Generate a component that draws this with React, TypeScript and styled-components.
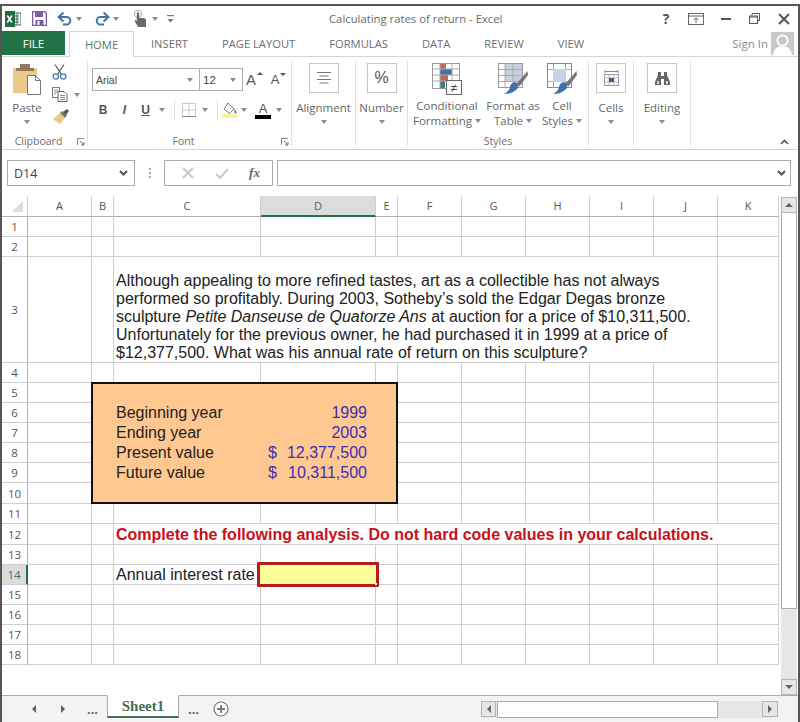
import React from "react";
import styled, { createGlobalStyle } from "styled-components";

const uiFont = `"Open Sans", "Noto Sans", sans-serif`;
const cellFont = `"Liberation Sans", Arial, sans-serif`;
const green = "#217346";
const gridLine = "#cfcfcf";

const GlobalStyle = createGlobalStyle`
  html, body {
    margin: 0;
    padding: 0;
    background: #fff;
  }
  * {
    box-sizing: border-box;
  }
`;

const Page = styled.div`
  width: 800px;
  height: 722px;
  padding-top: 4px;
  background: #fff;
  overflow: hidden;
`;

const Frame = styled.div`
  height: 718px;
  display: flex;
  flex-direction: column;
  position: relative;
  border: 2px solid #555;
  border-bottom: none;
  font-family: ${uiFont};
  color: #666;
`;

/* title bar */
const TitleBar = styled.div`
  height: 25px;
  flex: none;
  display: flex;
  align-items: center;
`;

const Qat = styled.div`
  width: 327px;
  display: flex;
  align-items: center;
`;

const QatSlot = styled.div<{ $w: number; $ml?: number }>`
  width: ${(p) => p.$w}px;
  margin-left: ${(p) => p.$ml ?? 0}px;
  display: flex;
  justify-content: center;
  align-items: center;
`;

const Caret = styled.span`
  display: inline-block;
  width: 0;
  height: 0;
  border-left: 3.5px solid transparent;
  border-right: 3.5px solid transparent;
  border-top: 4px solid #8a8a8a;
`;

const Title = styled.div`
  font-size: 11.3px;
  color: #6a6a6a;
  white-space: nowrap;
`;

const WindowButtons = styled.div`
  margin-left: auto;
  display: flex;
  align-items: center;
`;

const WindowButton = styled.div<{ $w: number }>`
  width: ${(p) => p.$w}px;
  display: flex;
  justify-content: center;
  align-items: center;
  font-weight: 700;
  font-size: 14px;
  color: #555;
`;

/* tabs */
const TabRow = styled.div`
  height: 26px;
  flex: none;
  display: flex;
  align-items: stretch;
  padding-bottom: 1px;
  border-bottom: 1px solid #d4d4d4;
`;

const FileTab = styled.div`
  width: 63px;
  background: ${green};
  color: #fff;
  font-size: 11.5px;
  display: flex;
  align-items: center;
  justify-content: center;
`;

const Tab = styled.div`
  padding: 0 17px;
  display: flex;
  align-items: center;
  font-size: 11.2px;
  white-space: nowrap;
  color: #6e6e6e;
`;

const ActiveTab = styled.div`
  width: 65px;
  margin: 0 0 -2px 4px;
  display: flex;
  align-items: center;
  justify-content: center;
  font-size: 11.2px;
  color: #4f7d66;
  background: #fff;
  border: 1px solid #d4d4d4;
  border-bottom: none;
`;

const SignIn = styled.div`
  margin-left: auto;
  margin-right: 4px;
  display: flex;
  align-items: center;
  gap: 3px;
  font-size: 11.5px;
  color: #8a8a8a;
`;

/* ribbon */
const Ribbon = styled.div`
  height: 93px;
  flex: none;
  display: flex;
  padding-top: 4px;
  position: relative;
  border-bottom: 1px solid #d4d4d4;
`;

const Group = styled.div<{ $w: number }>`
  width: ${(p) => p.$w}px;
  height: 85px;
  border-right: 1px solid #e2e2e2;
  display: flex;
  flex-direction: column;
  position: relative;
`;

const GroupBody = styled.div`
  height: 72px;
  flex: none;
  display: flex;
`;

const GroupLabel = styled.div<{ $pr?: number }>`
  font-size: 10.5px;
  line-height: 14px;
  height: 14px;
  margin-top: 1px;
  padding-right: ${(p) => p.$pr ?? 0}px;
  text-align: center;
  color: #6e6e6e;
`;

const Launcher = styled.svg`
  position: absolute;
  right: 2px;
  bottom: 0;
  width: 8px;
  height: 8px;
`;

const PasteColumn = styled.div`
  width: 50px;
  display: flex;
  flex-direction: column;
  align-items: center;
  padding-top: 3px;
`;

const PasteLabel = styled.div`
  margin-top: 5px;
  font-size: 11.5px;
  line-height: 15px;
`;

const SmallColumn = styled.div`
  display: flex;
  flex-direction: column;
  padding-top: 3px;
  gap: 7px;
`;

const SmallTool = styled.div`
  display: flex;
  align-items: center;
  gap: 6px;
`;

const LabelText = styled.div`
  font-size: 11.5px;
  line-height: 15px;
  color: #666;
  text-align: center;
  white-space: nowrap;
`;

const FontColumn = styled.div`
  display: flex;
  flex-direction: column;
  padding: 7px 0 0 4px;
`;

const ComboRow = styled.div`
  display: flex;
  align-items: center;
  height: 23px;
`;

const Combo = styled.div<{ $w: number }>`
  width: ${(p) => p.$w}px;
  height: 23px;
  border: 1px solid #ababab;
  margin-right: -1px;
  padding: 0 6px 0 3px;
  display: flex;
  align-items: center;
  justify-content: space-between;
  font-family: ${cellFont};
  font-size: 10.5px;
  color: #444;
`;

const SizeValue = styled.span`
  font-size: 11.5px;
`;

const GrowFont = styled.div<{ $size: number }>`
  width: 23px;
  margin-left: 1px;
  display: flex;
  justify-content: center;
  align-items: flex-start;
  font-family: ${cellFont};
  font-size: ${(p) => p.$size}px;
  color: #555;
  gap: 1px;
`;

const TinyArrow = styled.span<{ $down?: boolean }>`
  width: 0;
  height: 0;
  margin-top: 1px;
  border-left: 3px solid transparent;
  border-right: 3px solid transparent;
  ${(p) =>
    p.$down ? "border-top: 3px solid #555;" : "border-bottom: 3px solid #555;"}
`;

const ToolRow = styled.div`
  display: flex;
  align-items: center;
  height: 22px;
  margin-top: 8px;
`;

const FontTool = styled.div<{ $w: number; $ml?: number }>`
  width: ${(p) => p.$w}px;
  margin-left: ${(p) => p.$ml ?? 0}px;
  display: flex;
  justify-content: center;
  align-items: center;
`;

const StyleLetter = styled.span<{ $italic?: boolean; $underline?: boolean }>`
  font-family: ${cellFont};
  font-size: 12px;
  font-weight: 700;
  color: #555;
  font-style: ${(p) => (p.$italic ? "italic" : "normal")};
  text-decoration: ${(p) => (p.$underline ? "underline" : "none")};
`;

const ToolCaret = styled.div`
  width: 12px;
  display: flex;
  justify-content: center;
`;

const ToolSeparator = styled.div`
  width: 1px;
  height: 20px;
  margin: 0 4px 0 6px;
  background: #e2e2e2;
`;

const ColorA = styled.div`
  display: flex;
  flex-direction: column;
  align-items: center;
  font-family: ${cellFont};
  font-size: 13px;
  line-height: 13px;
  color: #555;

  &::after {
    content: "";
    width: 16px;
    height: 4px;
    background: #000;
  }
`;

const BoxedColumn = styled.div`
  flex: 1;
  display: flex;
  flex-direction: column;
  align-items: center;
  padding-top: 2px;
`;

const BigBox = styled.div`
  width: 30px;
  height: 30px;
  border: 1px solid #c6c6c6;
  display: flex;
  align-items: center;
  justify-content: center;
  margin-bottom: 7px;
  font-family: ${cellFont};
  font-size: 16px;
  color: #555;
`;

const CaretLine = styled.div`
  height: 14px;
  display: flex;
  align-items: center;
`;

const StyleColumn = styled.div<{ $w: number }>`
  width: ${(p) => p.$w}px;
  display: flex;
  flex-direction: column;
  align-items: center;
  padding-top: 2px;
`;

const StyleIcon = styled.div`
  height: 33px;
  margin-bottom: 2px;
`;

const InlineCaret = styled(Caret)`
  margin-left: 3px;
  vertical-align: 2px;
`;

const Collapse = styled.svg`
  position: absolute;
  right: 9px;
  bottom: 4px;
`;

/* formula bar */
const FormulaBar = styled.div`
  height: 46px;
  flex: none;
  display: flex;
  align-items: flex-start;
  padding: 10px 7px 0 5px;
`;

const NameBox = styled.div`
  width: 128px;
  height: 26px;
  border: 1px solid #ababab;
  display: flex;
  align-items: center;
  justify-content: space-between;
  padding: 0 6px;
  font-size: 12.5px;
  color: #444;
`;

const Grip = styled.div`
  width: 29px;
  height: 26px;
  display: flex;
  flex-direction: column;
  align-items: center;
  justify-content: center;
  gap: 2px;

  span {
    width: 2px;
    height: 2px;
    background: #aaa;
  }
`;

const FxBox = styled.div`
  width: 109px;
  height: 26px;
  margin-right: 4px;
  border: 1px solid #ababab;
  display: flex;
  align-items: center;
  justify-content: space-around;
  padding: 0 2px 0 6px;
`;

const FxLabel = styled.span`
  font-family: "Liberation Serif", serif;
  font-style: italic;
  font-weight: 700;
  font-size: 13px;
  color: #666;
`;

const FormulaInput = styled.div`
  flex: 1;
  height: 26px;
  border: 1px solid #ababab;
  display: flex;
  align-items: center;
  justify-content: flex-end;
  padding-right: 4px;
`;

/* sheet */
const SheetArea = styled.div`
  flex: 1;
  min-height: 0;
  display: flex;
`;

const Sheet = styled.div`
  width: 777px;
  position: relative;
`;

const Row = styled.div<{ $h: number }>`
  display: grid;
  grid-template-columns: 26px 64px 22px 147px 115px 22px 64px 64px 64px 64px 64px 61px;
  height: ${(p) => p.$h}px;
`;

const ColumnHead = styled.div<{ $active?: boolean }>`
  display: flex;
  align-items: center;
  justify-content: center;
  font-size: 11px;
  padding-bottom: 1px;
  color: ${(p) => (p.$active ? "#3f6f57" : "#555")};
  background: ${(p) => (p.$active ? "#dcdcdc" : "#fff")};
  border-right: 1px solid ${gridLine};
  border-bottom: ${(p) => (p.$active ? `2px solid ${green}` : "1px solid #b0b0b0")};
`;

const Corner = styled.div`
  position: relative;
  border-right: 1px solid ${gridLine};
  border-bottom: 1px solid #b0b0b0;

  &::after {
    content: "";
    position: absolute;
    right: 4px;
    bottom: 4px;
    border-left: 11px solid transparent;
    border-bottom: 11px solid #dcdcdc;
  }
`;

const RowHead = styled.div<{ $active?: boolean }>`
  display: flex;
  align-items: center;
  justify-content: center;
  font-size: 11.5px;
  color: ${(p) => (p.$active ? "#3f6f57" : "#555")};
  background: ${(p) => (p.$active ? "#dcdcdc" : "#fff")};
  border-right: ${(p) => (p.$active ? `2px solid ${green}` : "1px solid #b0b0b0")};
  border-bottom: 1px solid ${gridLine};
`;

const Cell = styled.div<{ $span?: number }>`
  grid-column: span ${(p) => p.$span ?? 1};
  border-right: 1px solid ${gridLine};
  border-bottom: 1px solid ${gridLine};
  padding-left: 2px;
  position: relative;
  display: flex;
  font-family: ${cellFont};
  font-size: 16px;
  line-height: 18px;
  color: #222;
  white-space: nowrap;
`;

const Paragraph = styled.div`
  align-self: flex-end;
`;

const Analysis = styled.div`
  align-self: center;
  padding-top: 1px;
  font-weight: 700;
  color: #c8101a;
`;

const RateLabel = styled.div`
  align-self: center;
`;

const SelectedCell = styled.div`
  position: absolute;
  left: -4px;
  top: -3px;
  width: 122px;
  height: 25px;
  z-index: 2;
  background: #ffff99;
  border: 3px solid #b51c1c;
  border-radius: 1px;

  &::after {
    content: "";
    position: absolute;
    right: -1px;
    bottom: -1px;
    width: 2px;
    height: 2px;
    background: #fff;
  }
`;

const InputsBox = styled.div`
  position: absolute;
  left: 89px;
  top: 186px;
  width: 307px;
  height: 122px;
  z-index: 1;
  padding: 19px 0 0 23px;
  background: #ffc890;
  border: 2px solid #111;
  font-family: ${cellFont};
  font-size: 16px;
  color: #222;
`;

const InputRow = styled.div`
  height: 20px;
  line-height: 20px;
  display: grid;
  grid-template-columns: 152px 99px;
`;

const InputValue = styled.div`
  display: flex;
  justify-content: space-between;
  color: #3a2fb5;
`;

const Year = styled.span`
  margin-left: auto;
`;

/* scroll bars */
const VScroll = styled.div`
  width: 16px;
  margin-left: 2px;
  margin-top: 1px;
  display: flex;
  flex-direction: column;
  background: #e6e6e6;
`;

const ScrollButton = styled.div<{ $w?: number }>`
  width: ${(p) => (p.$w ? `${p.$w}px` : "100%")};
  height: 16px;
  flex: none;
  background: #e6e6e6;
  border: 1px solid #b4b4b4;
  display: flex;
  align-items: center;
  justify-content: center;
`;

const VThumb = styled.div`
  height: 396px;
  background: #fff;
  border: 1px solid #ababab;
  border-top: none;
`;

const VTrack = styled.div`
  flex: 1;
`;

const Triangle = styled.span<{ $dir: "up" | "down" | "left" | "right"; $color?: string }>`
  width: 0;
  height: 0;
  ${(p) => {
    const c = p.$color ?? "#666";
    if (p.$dir === "up") return `border-left:4px solid transparent;border-right:4px solid transparent;border-bottom:4px solid ${c};`;
    if (p.$dir === "down") return `border-left:4px solid transparent;border-right:4px solid transparent;border-top:4px solid ${c};`;
    if (p.$dir === "left") return `border-top:4px solid transparent;border-bottom:4px solid transparent;border-right:4px solid ${c};`;
    return `border-top:4px solid transparent;border-bottom:4px solid transparent;border-left:4px solid ${c};`;
  }}
`;

const SheetBar = styled.div`
  height: 27px;
  flex: none;
  display: flex;
  align-items: flex-start;
  padding-left: 18px;
  background: #f3f3f3;
  border-top: 1px solid #ababab;
`;

const SheetNav = styled.div<{ $w: number }>`
  width: ${(p) => p.$w}px;
  height: 26px;
  display: flex;
  align-items: center;
  justify-content: center;
  font-size: 13px;
  font-weight: 700;
  color: #4c6a5a;
`;

const SheetTab = styled.div`
  width: 72px;
  height: 23px;
  margin-top: -1px;
  padding-top: 1px;
  background: #fff;
  border: 1px solid #ababab;
  border-top: 1px solid #fff;
  border-bottom: 2px solid #3f6f57;
  display: flex;
  align-items: center;
  justify-content: center;
  font-family: "Liberation Serif", serif;
  font-size: 15px;
  font-weight: 700;
  color: #3f6f57;
`;

const HScroll = styled.div`
  position: absolute;
  left: 479px;
  bottom: 4px;
  width: 297px;
  height: 17px;
  display: flex;
  background: #e6e6e6;
`;

const HThumb = styled.div`
  width: 221px;
  margin-left: 1px;
  background: #fff;
  border: 1px solid #ababab;
`;

const HTrack = styled.div`
  flex: 1;
`;

const ExcelLogo = () => (
  <svg width="16" height="16" viewBox="0 0 16 16">
    <rect x="8" y="2" width="8" height="12" fill="#fff" stroke="#2b6a4a" />
    <path d="M10 5h4M10 8h4M10 11h4M12 2.5v11" stroke="#2b6a4a" strokeWidth="1" />
    <rect x="0" y="0" width="10" height="16" fill="#1d6f42" />
    <path d="M2.3 4.5l4.6 7M6.9 4.5l-4.6 7" stroke="#fff" strokeWidth="1.6" />
  </svg>
);

const SaveIcon = () => (
  <svg width="15" height="15" viewBox="0 0 15 15">
    <path d="M.5.5h12l2 2v12H.5z" fill="#fff" stroke="#7d5fa8" strokeWidth="1.6" />
    <rect x="3" y="1" width="8" height="5" fill="#7d5fa8" />
    <rect x="3.5" y="9" width="8" height="5" fill="#7d5fa8" />
    <rect x="5.5" y="10" width="2" height="4" fill="#fff" />
  </svg>
);

const ArrowSvg = styled.svg<{ $flip?: boolean }>`
  transform: ${(p) => (p.$flip ? "scaleX(-1)" : "none")};
`;

const UndoIcon = ({ flip }: { flip?: boolean }) => (
  <ArrowSvg width="15" height="14" viewBox="0 0 15 14" $flip={flip}>
    <path d="M2 5h7.5a3.8 3.8 0 0 1 0 7.6H6" fill="none" stroke="#3f72a8" strokeWidth="2" />
    <path d="M6.5 .6L1.6 5l4.9 4.4" fill="none" stroke="#3f72a8" strokeWidth="2" />
  </ArrowSvg>
);

const TouchIcon = () => (
  <svg width="14" height="17" viewBox="0 0 14 17">
    <circle cx="5" cy="4" r="3.6" fill="none" stroke="#a9a9a9" strokeWidth="1" />
    <path d="M3.8 3.5a1.2 1.2 0 0 1 2.4 0v4.5h4.5c1.6 0 2.3 1 2.3 2.2V17H5L1.5 11l1 -1 1.3 1z" fill="#6b6b6b" />
  </svg>
);

const CustomizeIcon = () => (
  <svg width="7" height="8" viewBox="0 0 7 8">
    <rect x="0" y="0" width="7" height="1.2" fill="#777" />
    <path d="M.5 4h6L3.5 7.6z" fill="#777" />
  </svg>
);

const DisplayOptionsIcon = () => (
  <svg width="16" height="12" viewBox="0 0 16 12">
    <rect x=".5" y=".5" width="15" height="11" fill="none" stroke="#666" />
    <path d="M.5 3h15" stroke="#666" />
    <path d="M8 10V5M5.8 7L8 4.8 10.2 7" fill="none" stroke="#666" />
  </svg>
);

const RestoreIcon = () => (
  <svg width="11" height="11" viewBox="0 0 11 11">
    <path d="M3 2.5V.5h7.5v7H8.5" fill="none" stroke="#555" />
    <rect x=".5" y="3" width="8" height="7.5" fill="none" stroke="#555" />
    <path d="M.5 4h8" stroke="#555" />
  </svg>
);

const MinimizeIcon = () => (
  <svg width="10" height="2" viewBox="0 0 10 2">
    <rect width="10" height="2" fill="#555" />
  </svg>
);

const CloseIcon = () => (
  <svg width="12" height="12" viewBox="0 0 12 12">
    <path d="M1 1l10 10M11 1L1 11" stroke="#555" strokeWidth="2" />
  </svg>
);

const Avatar = () => (
  <svg width="23" height="23" viewBox="0 0 23 23">
    <rect width="23" height="23" fill="#c9c9c9" />
    <circle cx="11.5" cy="8.5" r="5.2" fill="none" stroke="#fff" strokeWidth="1.8" />
    <path d="M2 23c.5-5 3.5-8 7-8.5h5c3.5.5 6.5 3.5 7 8.5z" fill="#fff" />
  </svg>
);

const PasteIcon = () => (
  <svg width="28" height="31" viewBox="0 0 28 31">
    <rect x="0" y="4" width="24" height="25" fill="#eac98a" />
    <rect x="7" y="0" width="10" height="6" fill="#8c7a5a" />
    <rect x="3" y="4" width="18" height="3" fill="#8c7a5a" />
    <path d="M14.5 11.5h8l5 5v14h-13z" fill="#fff" stroke="#777" />
    <path d="M22.5 11.5v5h5" fill="none" stroke="#777" />
  </svg>
);

const ScissorsIcon = () => (
  <svg width="15" height="16" viewBox="0 0 15 16">
    <path d="M3 .5l6.5 10M12 .5L5.5 10.5" stroke="#555" strokeWidth="1.2" fill="none" />
    <circle cx="3.8" cy="12.5" r="2.7" fill="none" stroke="#3f72a8" strokeWidth="1.2" />
    <circle cx="11.2" cy="12.5" r="2.7" fill="none" stroke="#3f72a8" strokeWidth="1.2" />
  </svg>
);

const CopyIcon = () => (
  <svg width="16" height="15" viewBox="0 0 16 15">
    <path d="M.5.5h7v10h-7z" fill="#fff" stroke="#777" />
    <path d="M2 3h4M2 5h4M2 7h2" stroke="#999" />
    <path d="M6 4.5h6l3 3v7H6z" fill="#fff" stroke="#666" />
    <path d="M8 8.5h5M8 10.5h5M8 12.5h5" stroke="#888" />
  </svg>
);

const BrushIcon = () => (
  <svg width="17" height="15" viewBox="0 0 17 15">
    <path d="M1 10l7-6 5 5-5 6c-2-1.5-5-3-7-5z" fill="#e8c98a" />
    <path d="M8 4l2-2 5 4-2 3z" fill="#777" />
    <path d="M11 3l4-3 2 2-3 4z" fill="#555" />
  </svg>
);

const LauncherIcon = () => (
  <Launcher viewBox="0 0 8 8">
    <path d="M.5 7V.5H7" fill="none" stroke="#888" />
    <path d="M3 3l4 4M7 4v3H4" fill="none" stroke="#666" />
  </Launcher>
);

const BordersIcon = () => (
  <svg width="14" height="14" viewBox="0 0 14 14">
    <rect x=".5" y=".5" width="13" height="13" fill="none" stroke="#999" strokeDasharray="1 1" />
    <path d="M7 .5v13M.5 7h13" stroke="#999" strokeDasharray="1 1" />
    <path d="M0 13.5h14" stroke="#888" />
  </svg>
);

const FillIcon = () => (
  <svg width="16" height="16" viewBox="0 0 16 16">
    <rect x="0" y="12" width="16" height="4" fill="#f8f3a0" />
    <path d="M6 1l6 6-4.5 4.5L2 7z" fill="#fff" stroke="#777" />
    <path d="M12.5 7c1.5 1.5 2 3 2 3.5a1 1 0 0 1-2 0z" fill="#3f72a8" />
  </svg>
);

const AlignIcon = () => (
  <svg width="14" height="12" viewBox="0 0 14 12">
    <path d="M0 .5h14M2.5 4h9M0 7.5h14M2.5 11h9" stroke="#777" />
  </svg>
);

const CellsIcon = () => (
  <svg width="15" height="16" viewBox="0 0 15 16">
    <path d="M1 1.5h13M1 0v3M14 0v3" stroke="#888" />
    <rect x=".5" y="4.5" width="14" height="11" fill="#fff" stroke="#999" />
    <path d="M5 4.5v11M10 4.5v11M.5 8h14M.5 12h14" stroke="#bbb" />
    <rect x="5" y="8" width="5" height="4" fill="#2f5f97" />
  </svg>
);

const BinocularsIcon = () => (
  <svg width="15" height="13" viewBox="0 0 15 13">
    <path d="M3 0h3v4h3V0h3v3l3 7v3H9V7H6v6H0v-3l3-7z" fill="#666" />
    <path d="M2 9h2v3H2zM11 9h2v3h-2z" fill="#ddd" />
  </svg>
);

const ConditionalIcon = () => (
  <svg width="30" height="32" viewBox="0 0 30 32">
    <rect x=".5" y=".5" width="27" height="25" fill="#fff" stroke="#999" />
    <rect x="8" y="1" width="6" height="5" fill="#c9674e" />
    <rect x="8" y="6" width="12" height="6" fill="#3f72a8" />
    <rect x="8" y="12" width="8" height="6" fill="#c9674e" />
    <rect x="8" y="18" width="5" height="7" fill="#3b7d8d" />
    <path d="M8 .5v25M20 .5v25M.5 6h27M.5 12h27M.5 18h27" stroke="#aaa" fill="none" />
    <rect x="14.5" y="17.5" width="15" height="14" fill="#fff" stroke="#666" />
    <text x="22" y="29" fontSize="12" fontFamily="Liberation Sans" textAnchor="middle" fill="#444">≠</text>
  </svg>
);

const BrushStroke = () => (
  <>
    <path d="M29.5 8l-11 12.5 3 3L30 12z" fill="#777" />
    <path d="M6 31c5 0 8-1 12-4 3-2 3-6 0-7.5-3-1-6 2-6 5-.5 2-3 5-6 6.5z" fill="#3f72a8" />
  </>
);

const FormatTableIcon = () => (
  <svg width="30" height="31" viewBox="0 0 30 31">
    <rect x=".5" y=".5" width="24" height="24" fill="#fff" stroke="#999" />
    <rect x="7" y="1" width="17" height="18" fill="#c5d0de" />
    <path d="M7 .5v24M15 .5v24M.5 6.5h24M.5 12.5h24M.5 18.5h24" stroke="#aaa" fill="none" />
    <BrushStroke />
  </svg>
);

const CellStylesIcon = () => (
  <svg width="30" height="31" viewBox="0 0 30 31">
    <rect x=".5" y=".5" width="24" height="24" fill="#fff" stroke="#888" />
    <path d="M.5 6.5h24M6.5 .5v24M18.5 .5v24M.5 18.5h24" stroke="#aaa" fill="none" />
    <rect x="6" y="6" width="13" height="13" fill="#c5d3e4" />
    <BrushStroke />
  </svg>
);

const Chevron = () => (
  <svg width="9" height="6" viewBox="0 0 9 6">
    <path d="M1 1l3.5 3.5L8 1" fill="none" stroke="#555" strokeWidth="2" />
  </svg>
);

const FormulaMark = ({ d }: { d: string }) => (
  <svg width="14" height="12" viewBox="0 0 14 12">
    <path d={d} fill="none" stroke="#c8c8c8" strokeWidth="2" />
  </svg>
);

const PlusCircle = () => (
  <svg width="16" height="16" viewBox="0 0 16 16">
    <circle cx="8" cy="8" r="7" fill="#fff" stroke="#777" strokeWidth="1.2" />
    <path d="M8 4v8M4 8h8" stroke="#777" strokeWidth="1.8" />
  </svg>
);

const columns = ["A", "B", "C", "D", "E", "F", "G", "H", "I", "J", "K"];
const rowHeights = [20, 20, 106, 20, 20, 20, 20, 20, 20, 21, 20, 21, 20, 20, 20, 20, 20, 20];
const tabs = ["INSERT", "PAGE LAYOUT", "FORMULAS", "DATA", "REVIEW", "VIEW"];

const inputs = [
  { label: "Beginning year", year: "1999" },
  { label: "Ending year", year: "2003" },
  { label: "Present value", amount: "12,377,500" },
  { label: "Future value", amount: "10,311,500" },
];

const renderCells = (row: number) => {
  if (row === 3) {
    return (
      <>
        <Cell />
        <Cell />
        <Cell $span={8}>
          <Paragraph>
            Although appealing to more refined tastes, art as a collectible has not always
            <br />
            performed so profitably. During 2003, Sotheby’s sold the Edgar Degas bronze
            <br />
            sculpture <i>Petite Danseuse de Quatorze Ans</i> at auction for a price of $10,311,500.
            <br />
            Unfortunately for the previous owner, he had purchased it in 1999 at a price of
            <br />
            $12,377,500. What was his annual rate of return on this sculpture?
          </Paragraph>
        </Cell>
        <Cell />
      </>
    );
  }
  if (row === 12) {
    return (
      <>
        <Cell />
        <Cell />
        <Cell $span={9}>
          <Analysis>Complete the following analysis. Do not hard code values in your calculations.</Analysis>
        </Cell>
      </>
    );
  }
  return columns.map((col) => (
    <Cell key={col}>
      {row === 14 && col === "C" && <RateLabel>Annual interest rate</RateLabel>}
      {row === 14 && col === "D" && <SelectedCell />}
    </Cell>
  ));
};

const BoxedGroup = ({ w, label, children }: { w: number; label: string; children: React.ReactNode }) => (
  <Group $w={w}>
    <GroupBody>
      <BoxedColumn>
        <BigBox>{children}</BigBox>
        <LabelText>{label}</LabelText>
        <CaretLine>
          <Caret />
        </CaretLine>
      </BoxedColumn>
    </GroupBody>
  </Group>
);

const App: React.FC = () => {
  return (
    <Page>
      <GlobalStyle />
      <Frame>
        <TitleBar>
          <Qat>
            <QatSlot $w={22}>
              <ExcelLogo />
            </QatSlot>
            <QatSlot $w={30}>
              <SaveIcon />
            </QatSlot>
            <QatSlot $w={20}>
              <UndoIcon />
            </QatSlot>
            <QatSlot $w={10}>
              <Caret />
            </QatSlot>
            <QatSlot $w={16} $ml={10}>
              <UndoIcon flip />
            </QatSlot>
            <QatSlot $w={12}>
              <Caret />
            </QatSlot>
            <QatSlot $w={16} $ml={10}>
              <TouchIcon />
            </QatSlot>
            <QatSlot $w={14}>
              <Caret />
            </QatSlot>
            <QatSlot $w={10} $ml={3}>
              <CustomizeIcon />
            </QatSlot>
          </Qat>
          <Title>Calculating rates of return - Excel</Title>
          <WindowButtons>
            <WindowButton $w={28}>?</WindowButton>
            <WindowButton $w={31}>
              <DisplayOptionsIcon />
            </WindowButton>
            <WindowButton $w={29}>
              <MinimizeIcon />
            </WindowButton>
            <WindowButton $w={29}>
              <RestoreIcon />
            </WindowButton>
            <WindowButton $w={29}>
              <CloseIcon />
            </WindowButton>
          </WindowButtons>
        </TitleBar>

        <TabRow>
          <FileTab>FILE</FileTab>
          <ActiveTab>HOME</ActiveTab>
          {tabs.map((tab) => (
            <Tab key={tab}>{tab}</Tab>
          ))}
          <SignIn>
            Sign In
            <Avatar />
          </SignIn>
        </TabRow>

        <Ribbon>
          <Group $w={86}>
            <GroupBody>
              <PasteColumn>
                <PasteIcon />
                <PasteLabel>Paste</PasteLabel>
                <CaretLine>
                  <Caret />
                </CaretLine>
              </PasteColumn>
              <SmallColumn>
                <ScissorsIcon />
                <SmallTool>
                  <CopyIcon />
                  <Caret />
                </SmallTool>
                <BrushIcon />
              </SmallColumn>
            </GroupBody>
            <GroupLabel $pr={12}>Clipboard</GroupLabel>
            <LauncherIcon />
          </Group>

          <Group $w={204}>
            <GroupBody>
              <FontColumn>
                <ComboRow>
                  <Combo $w={108}>
                    Arial
                    <Caret />
                  </Combo>
                  <Combo $w={44}>
                    <SizeValue>12</SizeValue>
                    <Caret />
                  </Combo>
                  <GrowFont $size={15}>
                    A
                    <TinyArrow />
                  </GrowFont>
                  <GrowFont $size={13}>
                    A
                    <TinyArrow $down />
                  </GrowFont>
                </ComboRow>
                <ToolRow>
                  <FontTool $w={22}>
                    <StyleLetter>B</StyleLetter>
                  </FontTool>
                  <FontTool $w={21}>
                    <StyleLetter $italic>I</StyleLetter>
                  </FontTool>
                  <FontTool $w={21}>
                    <StyleLetter $underline>U</StyleLetter>
                  </FontTool>
                  <ToolCaret>
                    <Caret />
                  </ToolCaret>
                  <ToolSeparator />
                  <FontTool $w={20}>
                    <BordersIcon />
                  </FontTool>
                  <ToolCaret>
                    <Caret />
                  </ToolCaret>
                  <ToolSeparator />
                  <FontTool $w={16}>
                    <FillIcon />
                  </FontTool>
                  <ToolCaret>
                    <Caret />
                  </ToolCaret>
                  <FontTool $w={20} $ml={3}>
                    <ColorA>A</ColorA>
                  </FontTool>
                  <ToolCaret>
                    <Caret />
                  </ToolCaret>
                </ToolRow>
              </FontColumn>
            </GroupBody>
            <GroupLabel $pr={12}>Font</GroupLabel>
            <LauncherIcon />
          </Group>

          <BoxedGroup w={64} label="Alignment">
            <AlignIcon />
          </BoxedGroup>
          <BoxedGroup w={52} label="Number">
            %
          </BoxedGroup>

          <Group $w={181}>
            <GroupBody>
              <StyleColumn $w={78}>
                <StyleIcon>
                  <ConditionalIcon />
                </StyleIcon>
                <LabelText>
                  Conditional
                  <br />
                  Formatting
                  <InlineCaret />
                </LabelText>
              </StyleColumn>
              <StyleColumn $w={54}>
                <StyleIcon>
                  <FormatTableIcon />
                </StyleIcon>
                <LabelText>
                  Format as
                  <br />
                  Table
                  <InlineCaret />
                </LabelText>
              </StyleColumn>
              <StyleColumn $w={44}>
                <StyleIcon>
                  <CellStylesIcon />
                </StyleIcon>
                <LabelText>
                  Cell
                  <br />
                  Styles
                  <InlineCaret />
                </LabelText>
              </StyleColumn>
            </GroupBody>
            <GroupLabel>Styles</GroupLabel>
          </Group>

          <BoxedGroup w={45} label="Cells">
            <CellsIcon />
          </BoxedGroup>
          <BoxedGroup w={57} label="Editing">
            <BinocularsIcon />
          </BoxedGroup>

          <Collapse width="9" height="6" viewBox="0 0 9 6">
            <path d="M1 5l3.5-3.5L8 5" fill="none" stroke="#555" strokeWidth="1.6" />
          </Collapse>
        </Ribbon>

        <FormulaBar>
          <NameBox>
            D14
            <Chevron />
          </NameBox>
          <Grip>
            <span />
            <span />
            <span />
          </Grip>
          <FxBox>
            <FormulaMark d="M2 1l10 10M12 1L2 11" />
            <FormulaMark d="M1 7l4 4 8-9" />
            <FxLabel>fx</FxLabel>
          </FxBox>
          <FormulaInput>
            <Chevron />
          </FormulaInput>
        </FormulaBar>

        <SheetArea>
          <Sheet>
            <Row $h={21}>
              <Corner />
              {columns.map((col) => (
                <ColumnHead key={col} $active={col === "D"}>
                  {col}
                </ColumnHead>
              ))}
            </Row>
            {rowHeights.map((h, i) => (
              <Row key={i} $h={h}>
                <RowHead $active={i + 1 === 14}>{i + 1}</RowHead>
                {renderCells(i + 1)}
              </Row>
            ))}
            <InputsBox>
              {inputs.map((item) => (
                <InputRow key={item.label}>
                  <span>{item.label}</span>
                  <InputValue>
                    {item.year ? (
                      <Year>{item.year}</Year>
                    ) : (
                      <>
                        <span>$</span>
                        <span>{item.amount}</span>
                      </>
                    )}
                  </InputValue>
                </InputRow>
              ))}
            </InputsBox>
          </Sheet>
          <VScroll>
            <ScrollButton>
              <Triangle $dir="up" />
            </ScrollButton>
            <VThumb />
            <VTrack />
            <ScrollButton>
              <Triangle $dir="down" />
            </ScrollButton>
          </VScroll>
        </SheetArea>

        <SheetBar>
          <SheetNav $w={28}>
            <Triangle $dir="left" $color="#3f6f57" />
          </SheetNav>
          <SheetNav $w={30}>
            <Triangle $dir="right" $color="#3f6f57" />
          </SheetNav>
          <SheetNav $w={29}>...</SheetNav>
          <SheetTab>Sheet1</SheetTab>
          <SheetNav $w={29}>...</SheetNav>
          <SheetNav $w={26}>
            <PlusCircle />
          </SheetNav>
        </SheetBar>
        <HScroll>
          <ScrollButton $w={15}>
            <Triangle $dir="left" />
          </ScrollButton>
          <HThumb />
          <HTrack />
          <ScrollButton $w={16}>
            <Triangle $dir="right" />
          </ScrollButton>
        </HScroll>
      </Frame>
    </Page>
  );
};

export default App;
